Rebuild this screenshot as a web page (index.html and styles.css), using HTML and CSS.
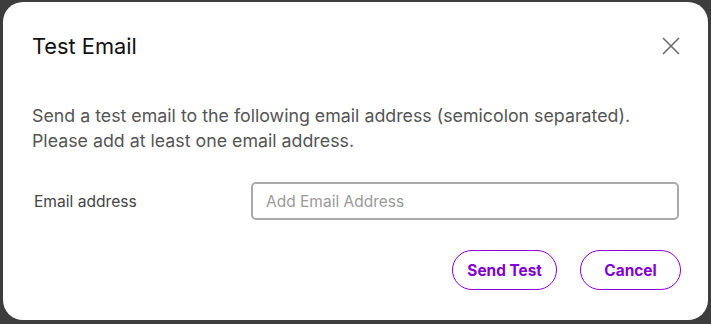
FILE: index.html
```html
<!DOCTYPE html>
<html>
<head>
<meta charset="utf-8">
<link rel="stylesheet" href="styles.css">
</head>
<body>
<div class="dialog">
  <div class="header">
    <h1 class="title">Test Email</h1>
    <button class="close" aria-label="Close">
      <svg width="20" height="20" viewBox="0 0 20 20"><path d="M2 2 L18 18 M18 2 L2 18" stroke="#6b6b6b" stroke-width="1.6" fill="none"/></svg>
    </button>
  </div>
  <p class="desc">Send a test email to the following email address (semicolon separated).<br>Please add at least one email address.</p>
  <div class="field">
    <label class="label">Email address</label>
    <input class="input" type="text" placeholder="Add Email Address">
  </div>
  <div class="actions">
    <button class="btn">Send Test</button>
    <button class="btn">Cancel</button>
  </div>
</div>
</body>
</html>
```
FILE: styles.css
```css
html, body { margin: 0; padding: 0; }
body {
  background: #3d3d3d;
  width: 711px;
  height: 324px;
  padding: 2px 3px 0 3px;
  box-sizing: border-box;
  font-family: Inter, "Noto Sans", sans-serif;
}
.dialog {
  background: #fff;
  border-radius: 20px;
  height: 318px;
  box-sizing: border-box;
  padding: 0 27px 0 29px;
}
.header {
  display: flex;
  align-items: center;
  justify-content: space-between;
  height: 89px;
}
.title {
  margin: 0;
  font-size: 21.8px;
  font-weight: 400;
  color: #111;
  padding-bottom: 2px;
}
.close {
  border: 0;
  background: none;
  padding: 0;
  width: 20px;
  height: 20px;
  margin-bottom: 2px;
}
.desc {
  margin: 12px 0 0 0;
  font-size: 17.8px;
  line-height: 25px;
  color: #555;
}
.field {
  display: flex;
  align-items: center;
  margin-top: 29px;
}
.label {
  width: 217px;
  padding-left: 2px;
  font-size: 15.6px;
  color: #444;
}
.input {
  flex: 1;
  margin-right: 2px;
  height: 38px;
  box-sizing: border-box;
  border: 2px solid #aaa;
  border-radius: 5px;
  padding: 0 13px;
  font-family: inherit;
  font-size: 15.5px;
  color: #333;
  outline: none;
}
.input::placeholder { color: #9a9a9a; }
.actions {
  display: flex;
  justify-content: flex-end;
  gap: 23px;
  margin-top: 30px;
}
.btn {
  height: 40px;
  border: 1.5px solid #8b00d8;
  border-radius: 20px;
  background: #fff;
  color: #8200d0;
  font-family: inherit;
  font-weight: 700;
  font-size: 15.4px;
  padding: 0 14px;
  min-width: 101px;
}
```
